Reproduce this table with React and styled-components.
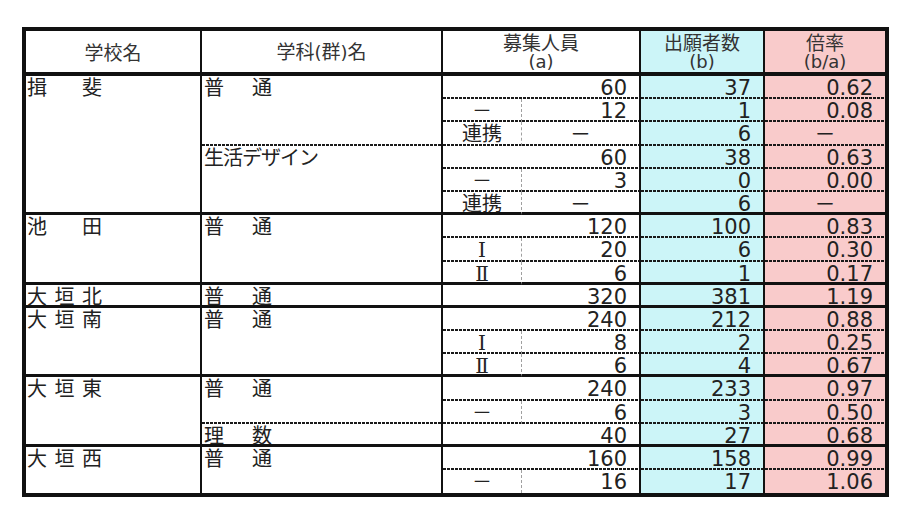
import React from "react";
import styled, { createGlobalStyle } from "styled-components";

const GlobalStyle = createGlobalStyle`
  html, body {
    margin: 0;
    padding: 0;
    background: #fff;
  }
  body {
    font-family: "DejaVu Sans", "Noto Sans CJK JP", sans-serif;
    color: #222;
  }
`;

const BLUE = "#ccf5f8";
const PINK = "#f9cbcb";
const DOTS =
  "repeating-linear-gradient(90deg, #1a1a1a 0 3px, transparent 3px 4px) left bottom / 100% 2px no-repeat";

const Page = styled.div`
  padding: 27px 0 0 22px;
`;

const Table = styled.div`
  display: grid;
  grid-template-columns: 176px 241px 79px 119px 124px 120px;
  grid-template-rows: 45px repeat(18, 23.2px);
  width: max-content;
  border: 4px solid #111;
`;

const Cell = styled.div`
  box-sizing: border-box;
  min-width: 0;
  white-space: nowrap;
  grid-row: span ${(p) => p.$rows || 1};
  grid-column: span ${(p) => p.$cols || 1};
  border-right: ${(p) =>
    p.$last ? "none" : p.$dash ? "1px dashed #a0a0a0" : "2px solid #111"};
  border-bottom: ${(p) => (p.$end === "group" ? "3px solid #111" : "none")};
  background: ${(p) =>
    p.$end === "dot" ? `${DOTS}, ${p.$tone || "#fff"}` : p.$tone || "#fff"};
`;

const HeadCell = styled(Cell)`
  border-bottom: 4px solid #111;
  display: flex;
  flex-direction: column;
  align-items: center;
  justify-content: center;
  font-family: "Noto Sans CJK JP", sans-serif;
  font-size: 19px;
  line-height: 20px;
  color: #333;
`;

const Paren = styled.span`
  font-family: "DejaVu Sans", sans-serif;
  font-size: 18px;
`;

const NameCell = styled(Cell)`
  font-family: "Noto Sans CJK JP", sans-serif;
  font-size: 20px;
  line-height: 21px;
  letter-spacing: ${(p) => p.$spacing}px;
  padding-left: ${(p) => p.$indent}px;
`;

const LabelCell = styled(Cell)`
  font-family: ${(p) =>
    p.$serif ? '"DejaVu Serif", "Noto Sans CJK JP", serif' : '"Noto Sans CJK JP", sans-serif'};
  font-size: 20px;
  line-height: 21px;
  padding-top: ${(p) => (p.$serif ? 2 : 0)}px;
  text-align: center;
`;

const NumCell = styled(Cell)`
  font-family: "DejaVu Sans", "Noto Sans CJK JP", sans-serif;
  font-size: 21px;
  line-height: 21px;
  padding-top: 2px;
  text-align: ${(p) => (p.$center ? "center" : "right")};
  padding-right: ${(p) => (p.$center ? 0 : 12)}px;
`;

const DASH = "－";

const groups = [
  {
    school: "揖　斐",
    depts: [
      {
        name: "普　通",
        rows: [
          { a: "60", b: "37", r: "0.62" },
          { label: DASH, a: "12", b: "1", r: "0.08" },
          { label: "連携", a: DASH, b: "6", r: DASH },
        ],
      },
      {
        name: "生活デザイン",
        tight: true,
        rows: [
          { a: "60", b: "38", r: "0.63" },
          { label: DASH, a: "3", b: "0", r: "0.00" },
          { label: "連携", a: DASH, b: "6", r: DASH },
        ],
      },
    ],
  },
  {
    school: "池　田",
    depts: [
      {
        name: "普　通",
        rows: [
          { a: "120", b: "100", r: "0.83" },
          { label: "Ⅰ", a: "20", b: "6", r: "0.30" },
          { label: "Ⅱ", a: "6", b: "1", r: "0.17" },
        ],
      },
    ],
  },
  {
    school: "大垣北",
    depts: [{ name: "普　通", rows: [{ a: "320", b: "381", r: "1.19" }] }],
  },
  {
    school: "大垣南",
    depts: [
      {
        name: "普　通",
        rows: [
          { a: "240", b: "212", r: "0.88" },
          { label: "Ⅰ", a: "8", b: "2", r: "0.25" },
          { label: "Ⅱ", a: "6", b: "4", r: "0.67" },
        ],
      },
    ],
  },
  {
    school: "大垣東",
    depts: [
      {
        name: "普　通",
        rows: [
          { a: "240", b: "233", r: "0.97" },
          { label: DASH, a: "6", b: "3", r: "0.50" },
        ],
      },
      { name: "理　数", rows: [{ a: "40", b: "27", r: "0.68" }] },
    ],
  },
  {
    school: "大垣西",
    depts: [
      {
        name: "普　通",
        rows: [
          { a: "160", b: "158", r: "0.99" },
          { label: DASH, a: "16", b: "17", r: "1.06" },
        ],
      },
    ],
  },
];

const isRoman = (s) => s === "Ⅰ" || s === "Ⅱ";

const renderGroup = (group, gi) => {
  const lastGroup = gi === groups.length - 1;
  const groupEnd = lastGroup ? "none" : "group";
  const total = group.depts.reduce((n, d) => n + d.rows.length, 0);
  const cells = [
    <NameCell key="s" $rows={total} $end={groupEnd} $spacing={7.5} $indent={1}>
      {group.school}
    </NameCell>,
  ];
  group.depts.forEach((dept, di) => {
    const lastDept = di === group.depts.length - 1;
    cells.push(
      <NameCell
        key={`d${di}`}
        $rows={dept.rows.length}
        $end={lastDept ? groupEnd : "dot"}
        $spacing={dept.tight ? -1 : 4}
        $indent={2}
      >
        {dept.name}
      </NameCell>
    );
    dept.rows.forEach((row, ri) => {
      const end = lastDept && ri === dept.rows.length - 1 ? groupEnd : "dot";
      const k = `${di}-${ri}`;
      if (row.label) {
        cells.push(
          <LabelCell key={`l${k}`} $end={end} $dash $serif={isRoman(row.label)}>
            {row.label}
          </LabelCell>,
          <NumCell key={`a${k}`} $end={end} $center={row.a === DASH}>
            {row.a}
          </NumCell>
        );
      } else {
        cells.push(
          <NumCell key={`a${k}`} $cols={2} $end={end}>
            {row.a}
          </NumCell>
        );
      }
      cells.push(
        <NumCell key={`b${k}`} $end={end} $tone={BLUE}>
          {row.b}
        </NumCell>,
        <NumCell key={`r${k}`} $end={end} $tone={PINK} $last $center={row.r === DASH}>
          {row.r}
        </NumCell>
      );
    });
  });
  return cells;
};

const App = () => (
  <Page>
    <GlobalStyle />
    <Table>
      <HeadCell>学校名</HeadCell>
      <HeadCell>
        <span>
          学科<Paren>(</Paren>群<Paren>)</Paren>名
        </span>
      </HeadCell>
      <HeadCell $cols={2}>
        <span>募集人員</span>
        <Paren>(a)</Paren>
      </HeadCell>
      <HeadCell $tone={BLUE}>
        <span>出願者数</span>
        <Paren>(b)</Paren>
      </HeadCell>
      <HeadCell $tone={PINK} $last>
        <span>倍率</span>
        <Paren>(b/a)</Paren>
      </HeadCell>
      {groups.map(renderGroup)}
    </Table>
  </Page>
);

export default App;
